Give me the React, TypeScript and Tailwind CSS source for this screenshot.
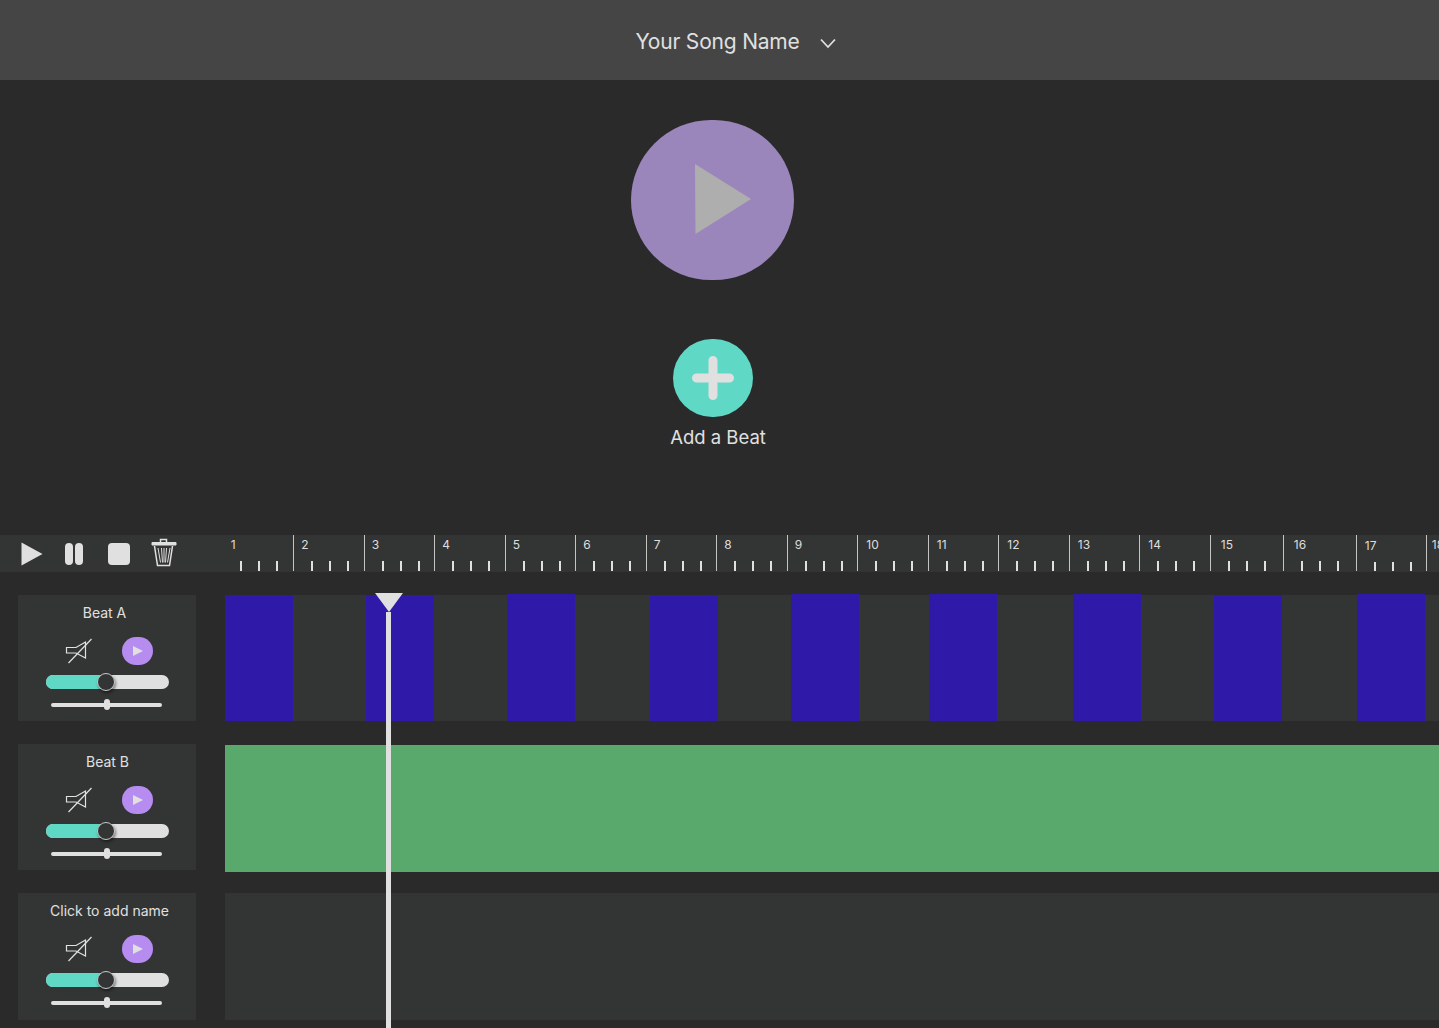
const segments = [
  { label: '1', width: 'w-[70.5px]', pad: 'pl-2', first: true },
  { label: '2', width: 'w-[70.5px]', pad: 'pl-[7px]' },
  { label: '3', width: 'w-[70.5px]', pad: 'pl-[7px]' },
  { label: '4', width: 'w-[70.5px]', pad: 'pl-[7px]' },
  { label: '5', width: 'w-[70.5px]', pad: 'pl-[7px]' },
  { label: '6', width: 'w-[70.5px]', pad: 'pl-[7px]' },
  { label: '7', width: 'w-[70.5px]', pad: 'pl-[7px]' },
  { label: '8', width: 'w-[70.5px]', pad: 'pl-[7px]' },
  { label: '9', width: 'w-[70.5px]', pad: 'pl-[7px]' },
  { label: '10', width: 'w-[70.5px]', pad: 'pl-2' },
  { label: '11', width: 'w-[70.5px]', pad: 'pl-2' },
  { label: '12', width: 'w-[70.5px]', pad: 'pl-2' },
  { label: '13', width: 'w-[70.5px]', pad: 'pl-2' },
  { label: '14', width: 'w-[70.5px]', pad: 'pl-2' },
  { label: '15', width: 'w-[73px]', pad: 'pl-[10px]' },
  { label: '16', width: 'w-[73px]', pad: 'pl-[10px]' },
  { label: '17', width: 'w-[70px]', pad: 'pl-2', low: true },
  { label: '18', width: 'w-[70px]', pad: 'pl-[5px]' },
];

const clips = [
  'w-[68px] h-[126px]',
  'w-[68px] h-[126px] ml-[73px]',
  'w-[68px] h-[127px] -mt-px ml-[73px]',
  'w-[68px] h-[126px] ml-[75px]',
  'w-[68px] h-[127px] -mt-px ml-[73px]',
  'w-[68px] h-[127px] -mt-px ml-[70px]',
  'w-[68px] h-[127px] -mt-px ml-[76px]',
  'w-[68px] h-[126px] ml-[73px]',
  'w-[68px] h-[127px] -mt-px ml-[75px]',
];

function RulerSegment({ label, width, pad, first, low }: { label: string; width: string; pad: string; first?: boolean; low?: boolean }) {
  return (
    <div className={`${width} shrink-0 h-[36px] flex flex-col ${first ? '' : 'border-l border-[#c4c4c4]'}`}>
      <div className={`${pad} text-[12px] leading-[14px] text-[#dedede] ${low ? 'mt-[4px]' : 'mt-[3px]'}`}>{label}</div>
      <div className={`mt-auto flex gap-[16px] pl-[17px] ${low ? 'h-[9px]' : 'h-[10px]'}`}>
        <span className="w-[2px] bg-[#e0e0e0]" />
        <span className="w-[2px] bg-[#e0e0e0]" />
        <span className="w-[2px] bg-[#e0e0e0]" />
      </div>
    </div>
  );
}

function TrackPanel({ name, nameOffset, height }: { name: string; nameOffset: string; height: string }) {
  return (
    <div className={`w-[178px] ${height} shrink-0 bg-[#333534] flex flex-col`}>
      <div className={`mt-[9px] text-center text-[14px] leading-[18px] text-[#e0e0e0] ${nameOffset}`}>{name}</div>
      <div className="mt-[15px] flex items-center pl-[47px] h-[28px]">
        <svg width="28" height="26" viewBox="0 0 28 26" fill="none" stroke="#e0e0e0" strokeWidth="1.200">
          <path d="M1.500 9.500h9.500l9.500-5.500v16l-9.500-5h-9.500z" />
          <path d="M3.500 25L26.500 1" />
        </svg>
        <div className="ml-[29px] w-[30.5px] h-[28px] rounded-full bg-[#b68cf0] flex items-center justify-center">
          <svg width="12" height="12" viewBox="0 0 12 12" className="ml-[2px]">
            <path d="M1 1l10 5-10 5z" fill="#e0e0e0" />
          </svg>
        </div>
      </div>
      <div className="relative mt-[10px] ml-[28.3px] w-[122.5px] h-[14px] rounded-full bg-[#e0e0e0]">
        <div className="w-[58px] h-[14px] rounded-l-full bg-[#5fd8c6]" />
        <div className="absolute left-[51px] top-[-2px] w-[18px] h-[18px] rounded-full bg-[#333534] border border-[#c8c8c8] shadow-[1px_2px_3px_rgba(0,0,0,0.45)]" />
      </div>
      <div className="relative mt-[13.5px] ml-[33px] w-[111px] h-[4px] rounded-full bg-[#e0e0e0]">
        <div className="absolute left-[53px] top-[-3.5px] w-[6px] h-[11px] rounded-full bg-[#e0e0e0]" />
      </div>
    </div>
  );
}

export default function App() {
  return (
    <div className="relative h-[1028px] overflow-hidden bg-[#2a2a2a] font-['Inter',sans-serif] text-[#e0e0e0]">
      {/* Header */}
      <header className="h-20 bg-[#454545] flex items-center justify-center gap-[20px] pl-[32px]">
        <span className="mt-[3px] text-[21px] leading-[28px] tracking-[-0.2px] text-[#e0e0e0]">Your Song Name</span>
        <svg width="16" height="11" viewBox="0 0 16 11" fill="none" stroke="#e0e0e0" strokeWidth="1.800" className="mt-[6px]">
          <path d="M1 1.500l7 7.500 7-7.500" />
        </svg>
      </header>

      {/* Main play + add beat */}
      <section className="h-[455px] flex flex-col items-center pr-[14px]">
        <button className="mt-10 w-[163px] h-[160px] rounded-full bg-[#9b86bb] flex items-center justify-center">
          <svg width="58" height="72" viewBox="0 0 58 72" className="ml-[20px] -mt-[3px]">
            <path d="M1 1l56 35-55.500 35z" fill="#aeaeae" />
          </svg>
        </button>
        <button className="mt-[59px] w-[80px] h-[78px] rounded-full bg-[#5fd8c6] flex items-center justify-center">
          <svg width="42" height="44" viewBox="0 0 42 44" fill="none" stroke="#e0e0e0" strokeWidth="9" strokeLinecap="round">
            <path d="M4.500 22h33M21 4.500v35" />
          </svg>
        </button>
        <div className="mt-[8px] ml-[11px] text-[18.5px] leading-[24px] text-[#e0e0e0]">Add a Beat</div>
      </section>

      {/* Toolbar + ruler */}
      <div className="h-[37px] bg-[#333534] flex overflow-hidden">
        <div className="w-[222.8px] shrink-0 flex items-center pl-[21px]">
          <svg width="22" height="24" viewBox="0 0 22 24" className="mt-[1px]">
            <path d="M0.500 0.500l21 11.500-21 11.500z" fill="#e0e0e0" />
          </svg>
          <div className="ml-[22px] flex gap-[2px] mt-[1px]">
            <span className="w-[8px] h-[22px] rounded-[4px] bg-[#e0e0e0]" />
            <span className="w-[8px] h-[22px] rounded-[4px] bg-[#e0e0e0]" />
          </div>
          <span className="ml-[25px] w-[22px] h-[22px] mt-[1px] rounded-[4px] bg-[#e0e0e0]" />
          <svg width="26" height="29" viewBox="0 0 26 29" fill="none" stroke="#e0e0e0" className="ml-[21px] -mt-[3px]">
            <path d="M9.500 4V1.500h6V4" strokeWidth="1.500" />
            <path d="M1 4.500h24v2.500H1z" fill="#e0e0e0" strokeWidth="1" />
            <path d="M3.500 8l3 19.500h12l3-19.500" strokeWidth="1.500" />
            <path d="M7 10l2.500 14.500M10.500 10l1 14.500M13 10v14.500M15.500 10l-1 14.500M19 10l-2.500 14.500" strokeWidth="1" />
          </svg>
        </div>
        <div className="flex">
          {segments.map((s) => (
            <RulerSegment key={s.label} {...s} />
          ))}
        </div>
      </div>

      {/* Tracks */}
      <div className="pt-[23px] pl-[18px] flex flex-col">
        <div className="flex gap-[29px]">
          <TrackPanel name="Beat A" nameOffset="-ml-[5px]" height="h-[126px]" />
          <div className="flex-1 h-[126px] bg-[#333534] flex">
            {clips.map((c, i) => (
              <div key={i} className={`${c} shrink-0 bg-[#2f19a8]`} />
            ))}
          </div>
        </div>
        <div className="mt-[23px] flex gap-[29px]">
          <TrackPanel name="Beat B" nameOffset="ml-[1px]" height="h-[126px]" />
          <div className="flex-1 mt-[1px] h-[127px] bg-[#5aa96c]" />
        </div>
        <div className="mt-[21px] flex gap-[29px]">
          <TrackPanel name="Click to add name" nameOffset="ml-[5px]" height="h-[127px]" />
          <div className="flex-1 h-[127px] bg-[#333534]" />
        </div>
      </div>

      {/* Playhead */}
      <div className="absolute left-[374.5px] top-[593px] bottom-0 w-[28px] flex flex-col items-center">
        <svg width="28" height="19" viewBox="0 0 28 19" className="shrink-0">
          <path d="M0 0H28L14 19z" fill="#e0e0e0" />
        </svg>
        <div className="w-[5px] flex-1 bg-[#e0e0e0]" />
      </div>
    </div>
  );
}
